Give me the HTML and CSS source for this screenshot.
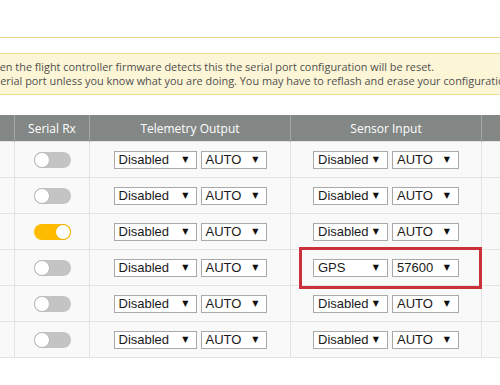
FILE: index.html
```html
<!DOCTYPE html>
<html lang="en">
<head>
    <meta charset="UTF-8">
    <title>Ports</title>
    <link rel="stylesheet" href="styles.css">
</head>
<body>
    <div class="page">
        <div class="topline"></div>
        <div class="note">
            <div class="line first">When the flight controller firmware detects this the serial port configuration will be reset.</div>
            <div class="line second">serial port unless you know what you are doing. You may have to reflash and erase your configuration if you do.</div>
        </div>

        <table class="ports">
            <thead>
                <tr>
                    <th class="c-id"></th>
                    <th class="c-rx">Serial Rx</th>
                    <th class="c-tel">Telemetry Output</th>
                    <th class="c-sen">Sensor Input</th>
                    <th class="c-last"></th>
                </tr>
            </thead>
            <tbody>
                <tr>
                    <td></td>
                    <td><span class="toggle"></span></td>
                    <td><span class="select w83">Disabled<i>▼</i></span><span class="select w66">AUTO<i>▼</i></span></td>
                    <td><span class="select w75">Disabled<i>▼</i></span><span class="select w67">AUTO<i>▼</i></span></td>
                    <td></td>
                </tr>
                <tr>
                    <td></td>
                    <td><span class="toggle"></span></td>
                    <td><span class="select w83">Disabled<i>▼</i></span><span class="select w66">AUTO<i>▼</i></span></td>
                    <td><span class="select w75">Disabled<i>▼</i></span><span class="select w67">AUTO<i>▼</i></span></td>
                    <td></td>
                </tr>
                <tr>
                    <td></td>
                    <td><span class="toggle on"></span></td>
                    <td><span class="select w83">Disabled<i>▼</i></span><span class="select w66">AUTO<i>▼</i></span></td>
                    <td><span class="select w75">Disabled<i>▼</i></span><span class="select w67">AUTO<i>▼</i></span></td>
                    <td></td>
                </tr>
                <tr>
                    <td></td>
                    <td><span class="toggle"></span></td>
                    <td><span class="select w83">Disabled<i>▼</i></span><span class="select w66">AUTO<i>▼</i></span></td>
                    <td class="marked">
                        <span class="select w75">GPS<i>▼</i></span><span class="select w67">57600<i>▼</i></span>
                        <span class="highlight"></span>
                    </td>
                    <td></td>
                </tr>
                <tr>
                    <td></td>
                    <td><span class="toggle"></span></td>
                    <td><span class="select w83">Disabled<i>▼</i></span><span class="select w66">AUTO<i>▼</i></span></td>
                    <td><span class="select w75">Disabled<i>▼</i></span><span class="select w67">AUTO<i>▼</i></span></td>
                    <td></td>
                </tr>
                <tr>
                    <td></td>
                    <td><span class="toggle"></span></td>
                    <td><span class="select w83">Disabled<i>▼</i></span><span class="select w66">AUTO<i>▼</i></span></td>
                    <td><span class="select w75">Disabled<i>▼</i></span><span class="select w67">AUTO<i>▼</i></span></td>
                    <td></td>
                </tr>
            </tbody>
        </table>
    </div>
</body>
</html>
```

FILE: styles.css
```css
html, body {
    margin: 0;
    padding: 0;
    overflow: hidden;
    background: #ffffff;
}
body {
    font-family: "Open Sans", "Liberation Sans", sans-serif;
    width: 500px;
    height: 385px;
}
.page {
    width: 500px;
    overflow: hidden;
}
.topline {
    height: 37px;
    border-bottom: 1px solid #e3d78f;
}
.note {
    margin-top: 15px;
    background: #fdf6d6;
    border-top: 1px solid #ecdf9a;
    border-bottom: 1px solid #ecdf9a;
    padding: 6px 0;
    font-size: 10.9px;
    line-height: 14px;
    color: #4f4f4f;
    white-space: nowrap;
}
.line.first {
    margin-left: -17px;
}
.line.second {
    margin-left: -5px;
}
.ports {
    margin-top: 20px;
    margin-left: -63px;
    border-collapse: collapse;
    table-layout: fixed;
    width: 640px;
}
.ports th {
    background: #838886;
    color: #ffffff;
    font-weight: normal;
    font-size: 12px;
    height: 26px;
    padding: 0;
    border-left: 1px solid #a3a7a5;
    border-right: 1px solid #a3a7a5;
    text-align: center;
}
.c-id { width: 76px; }
.c-rx { width: 74px; }
.c-tel { width: 200px; }
.c-sen { width: 190px; }
.c-last { width: 100px; }
.ports td {
    height: 35px;
    padding: 0;
    background: #f9f9f9;
    border: 1px solid #e3e3e3;
    text-align: center;
    white-space: nowrap;
    font-size: 0;
}
.marked {
    position: relative;
}
.highlight {
    position: absolute;
    left: 8px;
    top: -3px;
    width: 177px;
    height: 36px;
    border: 3px solid #c9323a;
}
.toggle {
    display: inline-block;
    position: relative;
    width: 37px;
    height: 16px;
    border-radius: 8px;
    background: #c4c4c4;
    vertical-align: middle;
}
.toggle::after {
    content: "";
    position: absolute;
    left: 0;
    top: 0;
    width: 14px;
    height: 14px;
    border-radius: 50%;
    background: #ffffff;
    border: 1px solid #b8b8b8;
}
.toggle.on {
    background: #ffbb00;
}
.toggle.on::after {
    left: 21px;
    border-color: #f0b000;
}
.select {
    display: inline-flex;
    justify-content: space-between;
    align-items: center;
    box-sizing: border-box;
    height: 18px;
    margin: 0 2px;
    padding: 0 7px 0 4px;
    background: #ffffff;
    border: 1px solid #a9a9a9;
    font-family: "Liberation Sans", Arial, sans-serif;
    font-size: 13px;
    color: #1a1a1a;
    vertical-align: middle;
    text-align: left;
}
.select i {
    font-style: normal;
    font-family: "DejaVu Sans", sans-serif;
    font-size: 8px;
    color: #111111;
}
.w83 { width: 83px; }
.w66 { width: 66px; }
.w75 { width: 75px; padding-right: 8px; }
.w67 { width: 67px; padding-right: 8px; }
```
